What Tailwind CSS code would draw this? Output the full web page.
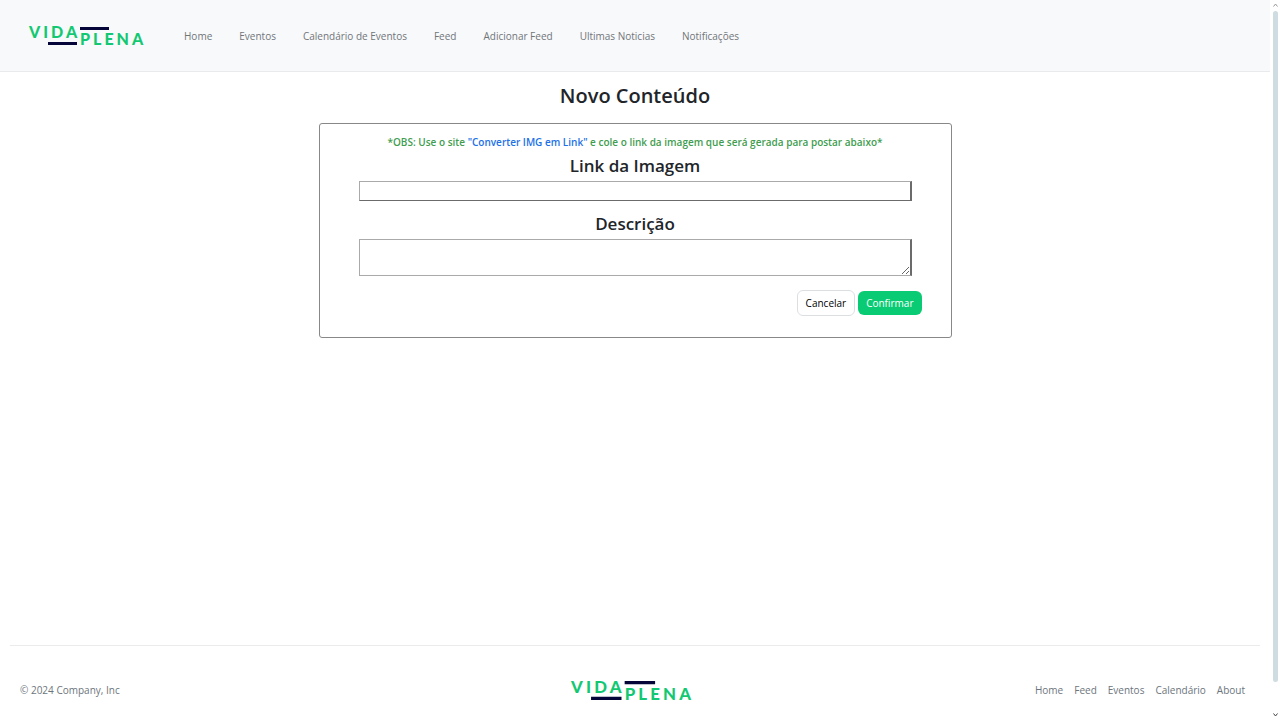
<!DOCTYPE html>
<html lang="pt-BR">
<head>
<meta charset="utf-8">
<meta name="viewport" content="width=device-width, initial-scale=1">
<title>Vida Plena - Novo Conteúdo</title>
<script src="https://cdn.jsdelivr.net/npm/@tailwindcss/browser@4"></script>
</head>
<body class="flex min-h-screen bg-white font-['Segoe_UI','Open_Sans',sans-serif] text-[10px] leading-4 text-[#212529]">
<svg class="hidden" aria-hidden="true">
  <symbol id="logo" viewBox="0 0 118 20">
    <g fill="#13c872" font-family="Lato, sans-serif" font-weight="900" font-size="16" letter-spacing="3">
      <text x="1" y="12">VIDA</text>
      <text x="52" y="19">PLENA</text>
    </g>
    <path fill="#05053a" d="M52 1h29v3H52zM20 16h29v3H20z"/>
  </symbol>
</svg>
<div class="flex min-w-0 flex-1 flex-col">
  <header class="flex h-[72px] items-center border-b border-[#e9eaeb] bg-[#f8f9fa] pl-7">
    <a href="#" aria-label="Vida Plena"><svg class="h-5 w-[118px]"><use href="#logo"/></svg></a>
    <nav class="ml-[38px] flex gap-[27px] text-[#70757a]">
      <a href="#">Home</a>
      <a href="#">Eventos</a>
      <a href="#">Calendário de Eventos</a>
      <a href="#">Feed</a>
      <a href="#">Adicionar Feed</a>
      <a href="#">Ultimas Noticias</a>
      <a href="#">Notificações</a>
    </nav>
  </header>
  <main class="flex flex-col items-center pt-2">
    <h1 class="text-[20px] leading-8 font-semibold">Novo Conteúdo</h1>
    <form class="mt-[11px] flex w-full max-w-[633px] flex-col rounded-[3px] border border-[#888] px-[39px] pt-[10px] pb-[21px]">
      <p class="text-center font-semibold text-[#3f9d4f]">*OBS: Use o site <a href="#" class="text-[#2070e8]">"Converter IMG em Link"</a> e cole o link da imagem que será gerada para postar abaixo*</p>
      <label for="link" class="mt-1 text-center text-[17px] leading-6 font-semibold">Link da Imagem</label>
      <input id="link" type="text" class="mt-[3px] h-5 border border-r-2 border-[#aaa] border-r-[#6b6b6b] border-b-[#6b6b6b] px-1">
      <label for="desc" class="mt-[11px] text-center text-[17px] leading-6 font-semibold">Descrição</label>
      <textarea id="desc" class="mt-[3px] h-[37px] resize border border-r-2 border-[#aaa] border-r-[#6b6b6b] px-1"></textarea>
      <div class="-mr-[10px] mt-[14px] flex items-center justify-end gap-[3px]">
        <button type="button" class="h-[26px] rounded-md border border-[#dcdfe2] px-2 text-black">Cancelar</button>
        <button type="submit" class="h-6 rounded-md bg-[#08cb73] px-2 text-white">Confirmar</button>
      </div>
    </form>
  </main>
  <footer class="mx-[10px] mt-auto grid h-[75px] grid-cols-3 items-center border-t border-[#e9ebed] pt-[14px] pr-[15px] pl-[10px] text-[#6c757d]">
    <p>© 2024 Company, Inc</p>
    <a href="#" class="justify-self-center" aria-label="Vida Plena"><svg class="h-[21px] w-[124px]"><use href="#logo"/></svg></a>
    <nav class="flex justify-end gap-[11px]">
      <a href="#">Home</a>
      <a href="#">Feed</a>
      <a href="#">Eventos</a>
      <a href="#">Calendário</a>
      <a href="#">About</a>
    </nav>
  </footer>
</div>
<div class="flex w-[10px] flex-col items-center gap-1 py-[3px]" aria-hidden="true">
  <svg class="h-1 w-[5px] fill-none stroke-[#999]" viewBox="0 0 5 4"><path d="M.5 3.500 2.500 1l2 2.500"/></svg>
  <div class="mb-[27px] w-[5px] flex-1 rounded-full bg-[#cfdce1]"></div>
  <svg class="h-1 w-[5px] fill-none stroke-[#444]" viewBox="0 0 5 4"><path d="M.5.5l2 2.500 2-2.500"/></svg>
</div>
</body>
</html>
